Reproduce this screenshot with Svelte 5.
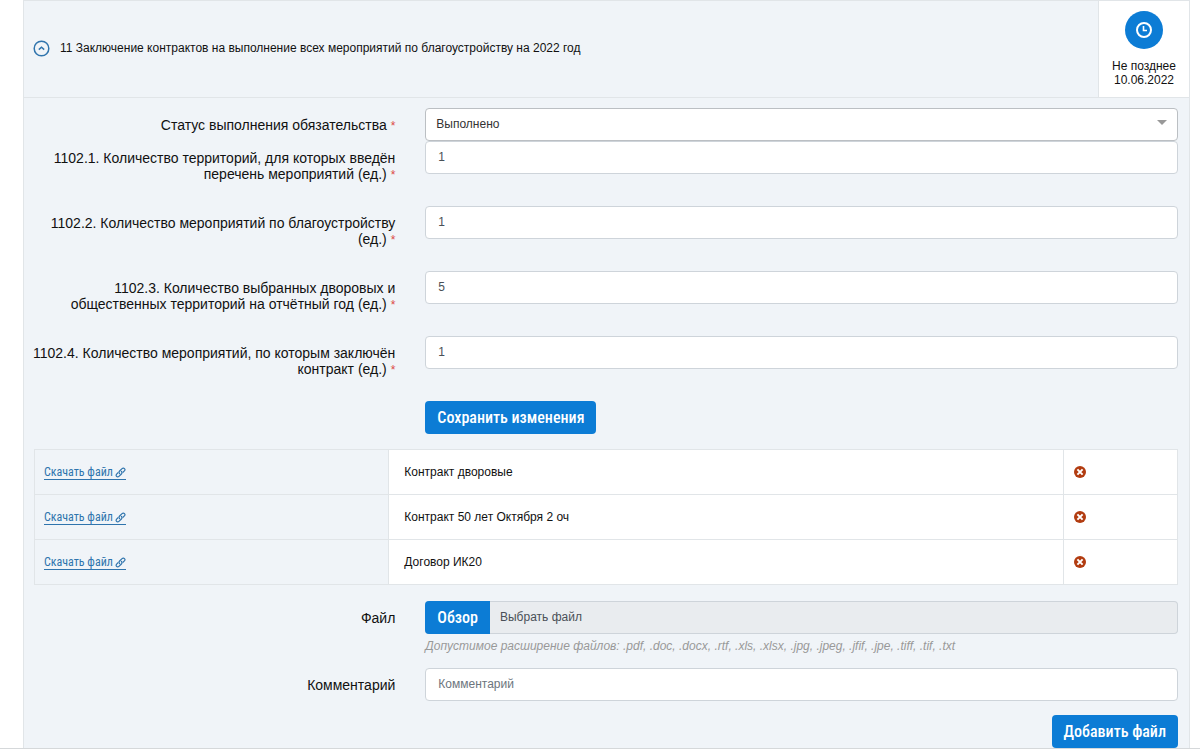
<!-- one obligation of the report: status, indicators and attached files -->
<script>
	const statuses = ['Выполнено', 'Не выполнено'];

	let open = $state(true);
	let status = $state('Выполнено');
	let comment = $state('');
	let fileName = $state('');

	let indicators = $state([
		{ id: 'i1', label: '1102.1. Количество территорий, для которых введён перечень мероприятий (ед.)', value: '1' },
		{ id: 'i2', label: '1102.2. Количество мероприятий по благоустройству (ед.)', value: '1' },
		{ id: 'i3', label: '1102.3. Количество выбранных дворовых и общественных территорий на отчётный год (ед.)', value: '5' },
		{ id: 'i4', label: '1102.4. Количество мероприятий, по которым заключён контракт (ед.)', value: '1' }
	]);

	let files = $state([
		{ id: 1, name: 'Контракт дворовые' },
		{ id: 2, name: 'Контракт 50 лет Октября 2 оч' },
		{ id: 3, name: 'Договор ИК20' }
	]);

	let nextId = 4;

	function removeFile(id) {
		files = files.filter((f) => f.id !== id);
	}

	function pickFile(event) {
		fileName = event.target.files[0]?.name ?? '';
	}

	function addFile() {
		if (!fileName) return;
		files.push({ id: nextId++, name: comment || fileName });
		fileName = '';
		comment = '';
	}
</script>

<main class="page">
	<section class="panel">
		<header class="head">
			<div class="title">
				<button class="toggle" type="button" aria-label="Свернуть" aria-expanded={open} onclick={() => (open = !open)}>
					<svg class:closed={!open} width="17" height="17" viewBox="0 0 17 17" fill="none" stroke="#2f74ad">
						<circle cx="8.5" cy="8.5" r="7.3" stroke-width="1.5" />
						<path d="M5.8 9.6 8.5 7.3l2.7 2.3" stroke-width="1.5" />
					</svg>
				</button>
				<span>11 Заключение контрактов на выполнение всех мероприятий по благоустройству на 2022 год</span>
			</div>
			<div class="deadline">
				<span class="clock">
					<svg width="18" height="18" viewBox="0 0 18 18" fill="none" stroke="#fff" stroke-width="2">
						<circle cx="9" cy="9" r="7" />
						<path d="M8.5 5v4.5H12" stroke-width="1.6" />
					</svg>
				</span>
				<span>Не позднее<br />10.06.2022</span>
			</div>
		</header>

		{#if open}
			<div class="body">
				<form onsubmit={(e) => e.preventDefault()}>
					<div class="row">
						<label for="status">Статус выполнения обязательства <i>*</i></label>
						<div class="field select">
							<select id="status" bind:value={status}>
								{#each statuses as s}
									<option>{s}</option>
								{/each}
							</select>
						</div>
					</div>
					{#each indicators as item (item.id)}
						<div class="row indicator">
							<label for={item.id}>{item.label} <i>*</i></label>
							<div class="field">
								<input id={item.id} type="text" bind:value={item.value} />
							</div>
						</div>
					{/each}
					<div class="row">
						<div class="field only">
							<button class="btn" type="submit">Сохранить изменения</button>
						</div>
					</div>
				</form>

				<table>
					<tbody>
						{#each files as file (file.id)}
							<tr>
								<th scope="row">
									<a href="#file-{file.id}">
										Скачать файл
										<svg width="11" height="11" viewBox="0 0 12 12" fill="none" stroke="currentColor" stroke-width="1.3" stroke-linecap="round">
											<path d="M5 7.1C4.1 6.2 4.2 5.2 5 4.4L7.7 1.8c.8-.8 1.9-.8 2.6-.1s.7 1.8-.1 2.6L8.8 5.7" />
											<path d="M7 4.9c.9.9.8 1.9 0 2.7l-2.7 2.6c-.8.8-1.9.8-2.6.1s-.7-1.8.1-2.6l1.4-1.4" />
										</svg>
									</a>
								</th>
								<td>{file.name}</td>
								<td class="actions">
									<button class="remove" type="button" aria-label="Удалить" onclick={() => removeFile(file.id)}>
										<svg width="12" height="12" viewBox="0 0 12 12">
											<circle cx="6" cy="6" r="6" fill="#b23c10" />
											<path d="m3.4 3.4 5.2 5.2m0-5.2L3.4 8.6" stroke="#fff" stroke-width="2" />
										</svg>
									</button>
								</td>
							</tr>
						{/each}
					</tbody>
				</table>

				<div class="row">
					<label for="file">Файл</label>
					<div class="field">
						<div class="file">
							<span class="browse">Обзор</span>
							<span class="file-name">{fileName || 'Выбрать файл'}</span>
							<input id="file" type="file" onchange={pickFile} />
						</div>
						<p class="hint">
							Допустимое расширение файлов: .pdf, .doc, .docx, .rtf, .xls, .xlsx, .jpg, .jpeg, .jfif, .jpe, .tiff, .tif, .txt
						</p>
					</div>
				</div>
				<div class="row">
					<label for="comment">Комментарий</label>
					<div class="field">
						<input id="comment" type="text" placeholder="Комментарий" bind:value={comment} />
					</div>
				</div>
				<div class="footer">
					<button class="btn" type="button" onclick={addFile}>Добавить файл</button>
				</div>
			</div>
		{/if}
	</section>
</main>

<style>
	:global(body) {
		background: #fff;
	}
	.page {
		padding: 0 10px 0 23px;
		border-bottom: 1px solid #d5d8da;
		font-family: 'Liberation Sans', Arial, sans-serif;
		font-size: 12px;
		line-height: 14px;
		color: #111;
	}
	.page * {
		box-sizing: border-box;
	}
	.panel {
		background: #f0f4f8;
		border: 1px solid #e1e5e8;
		border-bottom: 0;
	}
	.head {
		display: flex;
		border-bottom: 1px solid #e1e5e8;
	}
	.title {
		flex: 1;
		display: flex;
		align-items: center;
		gap: 10px;
		padding: 0 9px 2px;
	}
	.toggle,
	.remove {
		display: block;
		padding: 0;
		border: 0;
		background: none;
		cursor: pointer;
	}
	.toggle svg,
	.remove svg {
		display: block;
	}
	.closed {
		transform: rotate(180deg);
	}
	.deadline {
		width: 91px;
		padding: 10px 0;
		display: flex;
		flex-direction: column;
		align-items: center;
		gap: 10px;
		background: #fff;
		border-left: 1px solid #e1e5e8;
		text-align: center;
	}
	.clock {
		display: flex;
		align-items: center;
		justify-content: center;
		width: 38px;
		height: 38px;
		border-radius: 50%;
		background: #0c7cd5;
	}
	.body {
		padding: 10px 11px 0 10px;
	}
	.row {
		display: grid;
		grid-template-columns: repeat(12, 1fr);
		column-gap: 30px;
	}
	.indicator {
		min-height: 65px;
	}
	.row label {
		grid-column: span 4;
		margin-left: -5px;
		padding-top: 9px;
		font-size: 14px;
		line-height: 16px;
		text-align: right;
	}
	.row i {
		font-size: 12px;
		font-style: normal;
		color: #dc4a47;
	}
	.field {
		grid-column: span 8;
	}
	.only {
		grid-column: 5 / span 8;
	}
	.field input[type='text'],
	select {
		display: block;
		width: 100%;
		height: 33px;
		padding: 0 12px 2px;
		border: 1px solid #ced4da;
		border-radius: 4px;
		background: #fff;
		font: inherit;
		color: #495057;
	}
	input::placeholder {
		color: #6c757d;
		opacity: 1;
	}
	.select {
		position: relative;
	}
	.field select {
		appearance: none;
		padding: 0 10px 2px;
		border-color: #bbbfc3;
		color: #333;
	}
	.select::after {
		content: '';
		position: absolute;
		top: 12px;
		right: 11px;
		border: 5px solid transparent;
		border-top-color: #999;
		border-bottom: 0;
		pointer-events: none;
	}
	.btn,
	.browse {
		height: 33px;
		padding: 0 12px;
		border: 0;
		border-radius: 4px;
		background: #0c7cd5;
		color: #fff;
		font-family: 'Roboto Condensed', 'Liberation Sans Narrow', Roboto, sans-serif;
		font-size: 16px;
		line-height: 33px;
		font-weight: 500;
	}
	.btn {
		display: block;
		cursor: pointer;
	}
	table {
		width: 100%;
		margin: 15px 0 16px;
		border-collapse: collapse;
		table-layout: fixed;
	}
	th,
	td {
		height: 45px;
		padding: 0 15px;
		border: 1px solid #e1e5e8;
		text-align: left;
	}
	th {
		width: 31%;
		padding: 0 9px;
		font-weight: 400;
	}
	td {
		background: #fff;
	}
	.actions {
		width: 10%;
		padding: 0 10px;
	}
	a {
		display: inline-flex;
		align-items: center;
		gap: 2px;
		border-bottom: 1px solid #2f74ad;
		font-family: 'Roboto Condensed', 'Liberation Sans Narrow', Roboto, sans-serif;
		line-height: 13px;
		color: #2f74ad;
		text-decoration: none;
	}
	.file {
		position: relative;
		display: flex;
		height: 33px;
		border: 1px solid #ced4da;
		border-left: 0;
		border-radius: 4px;
		background: #e9ecef;
		color: #495057;
	}
	.browse {
		margin: -1px 0;
		border-radius: 4px 0 0 4px;
	}
	.file-name {
		padding: 0 10px;
		line-height: 31px;
	}
	.file input {
		position: absolute;
		inset: 0;
		width: 100%;
		opacity: 0;
		cursor: pointer;
	}
	.hint {
		margin: 5px 0 15px;
		font-style: italic;
		color: #999;
	}
	.footer {
		display: flex;
		justify-content: flex-end;
		margin-top: 14px;
	}
</style>
